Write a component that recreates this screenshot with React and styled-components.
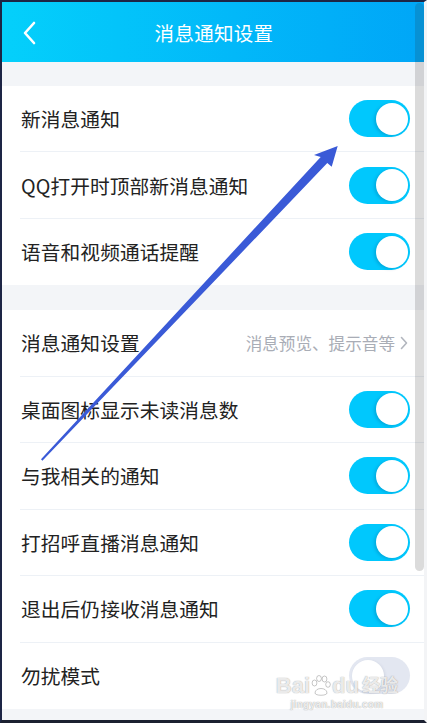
import React from "react";
import styled, { createGlobalStyle } from "styled-components";

const GlobalStyle = createGlobalStyle`
  html, body {
    margin: 0;
    padding: 0;
    background: #ffffff;
  }
  body {
    font-family: "Noto Sans CJK SC", "Noto Sans", sans-serif;
    overflow: hidden;
  }
  * {
    box-sizing: border-box;
  }
`;

const StyledScreen = styled.div`
  position: relative;
  width: 427px;
  height: 723px;
  display: flex;
  flex-direction: column;
  border-top: 2px solid #1d2545;
  border-left: 2px solid #1d2545;
  border-bottom: 3px solid #1b2030;
  border-right: 3px solid #f3f4f6;
  background: #ffffff;
  overflow: hidden;
`;
const StyledHeader = styled.header`
  height: 60px;
  flex-shrink: 0;
  display: flex;
  align-items: center;
  justify-content: center;
  position: relative;
  background: linear-gradient(90deg, #04d0fb 0%, #02b8f9 55%, #00a6f7 100%);
  color: #ffffff;
`;
const StyledBack = styled.div`
  position: absolute;
  left: 18px;
  top: 19px;
  width: 18px;
  height: 24px;
  display: flex;
`;
const StyledTitle = styled.h1`
  margin: 0;
  font-size: 19.5px;
  font-weight: 400;
  letter-spacing: 0.3px;
  padding-left: 2px;
`;
const StyledGap = styled.div`
  height: ${(p) => p.h}px;
  flex-shrink: 0;
  background: #f3f5f8;
`;
const StyledGroup = styled.div`
  display: flex;
  flex-direction: column;
  background: #ffffff;
`;
const StyledRow = styled.div`
  height: ${(p) => p.h}px;
  margin-left: 18px;
  padding: 0 14px 0 1px;
  display: flex;
  align-items: center;
  justify-content: space-between;
  border-bottom: ${(p) => (p.last ? "none" : "1px solid #edf1f6")};
`;
const StyledLabel = styled.span`
  font-size: 19.7px;
  color: #222222;
  letter-spacing: 0.1px;
`;
const StyledValue = styled.span`
  display: flex;
  align-items: center;
  gap: 5px;
  font-size: 16.6px;
  color: #a9adb6;
  margin-right: 2px;
`;
const StyledSwitch = styled.div`
  width: 61px;
  height: 37px;
  border-radius: 19px;
  padding: 2.5px;
  display: flex;
  justify-content: ${(p) => (p.on ? "flex-end" : "flex-start")};
  background: ${(p) => (p.on ? "#00c8fd" : "#e3e7f1")};
`;
const StyledKnob = styled.div`
  width: 32px;
  height: 32px;
  border-radius: 50%;
  background: #ffffff;
  box-shadow: ${(p) =>
    p.on
      ? "-2px 1px 3px rgba(0, 90, 140, 0.25)"
      : "1px 1px 3px rgba(60, 70, 110, 0.12)"};
`;
const StyledFill = styled.div`
  flex: 1;
  background: #f3f5f8;
`;
const StyledScrollThumb = styled.div`
  position: absolute;
  right: 0;
  top: 1px;
  width: 9px;
  height: 568px;
  border-radius: 5px;
  background: rgba(40, 40, 40, 0.17);
`;
const StyledArrow = styled.svg`
  position: absolute;
  left: -2px;
  top: -2px;
  width: 427px;
  height: 723px;
  pointer-events: none;
`;
const StyledWatermark = styled.div`
  position: absolute;
  right: 26px;
  bottom: 9px;
  display: flex;
  flex-direction: column;
  align-items: center;
  color: rgba(255, 255, 255, 0.8);
  text-shadow: 0 0 1px rgba(130, 130, 130, 0.5), 0 0 1px rgba(130, 130, 130, 0.5);
  font-family: "Liberation Sans", "Noto Sans CJK SC", sans-serif;
  pointer-events: none;
`;
const StyledMarkTop = styled.div`
  display: flex;
  align-items: center;
  font-size: 22px;
  font-weight: 700;
  line-height: 26px;
`;
const StyledMarkCn = styled.span`
  font-size: 18px;
  margin-left: 3px;
`;
const StyledMarkSub = styled.div`
  font-size: 10px;
  font-weight: 700;
  letter-spacing: 0.3px;
  line-height: 12px;
`;

const BackIcon = () => (
  <svg width="18" height="24" viewBox="0 0 18 24">
    <path d="M14 2 L5 12 L14 22" fill="none" stroke="#ffffff" strokeWidth="2.6" strokeLinecap="round" strokeLinejoin="round" />
  </svg>
);

const ChevronIcon = () => (
  <svg width="8" height="14" viewBox="0 0 8 14">
    <path d="M1.5 1.5 L6.5 7 L1.5 12.5" fill="none" stroke="#b2b6be" strokeWidth="1.6" strokeLinecap="round" strokeLinejoin="round" />
  </svg>
);

const PawIcon = () => (
  <svg width="22" height="24" viewBox="0 0 22 24">
    <g fill="rgba(255,255,255,0.85)" stroke="rgba(130,130,130,0.5)" strokeWidth="0.9">
      <ellipse cx="4.5" cy="9" rx="2.4" ry="3" />
      <ellipse cx="9" cy="4.5" rx="2.4" ry="3" />
      <ellipse cx="14.5" cy="5" rx="2.4" ry="3" />
      <ellipse cx="18" cy="10.5" rx="2.3" ry="2.8" />
      <path d="M5 19 C5 13, 17 13, 17 19 C17 22, 5 22, 5 19 Z" />
    </g>
  </svg>
);

const Switch = ({ on }) => (
  <StyledSwitch on={on ? 1 : 0}>
    <StyledKnob on={on ? 1 : 0} />
  </StyledSwitch>
);

const topRows = [
  { label: "新消息通知", on: true },
  { label: "QQ打开时顶部新消息通知", on: true },
  { label: "语音和视频通话提醒", on: true },
];

const bottomRows = [
  { label: "消息通知设置", value: "消息预览、提示音等" },
  { label: "桌面图标显示未读消息数", on: true },
  { label: "与我相关的通知", on: true },
  { label: "打招呼直播消息通知", on: true },
  { label: "退出后仍接收消息通知", on: true },
  { label: "勿扰模式", on: false },
];

const App = () => {
  return (
    <>
      <GlobalStyle />
      <StyledScreen>
        <StyledHeader>
          <StyledBack>
            <BackIcon />
          </StyledBack>
          <StyledTitle>消息通知设置</StyledTitle>
        </StyledHeader>
        <StyledGap h={24} />
        <StyledGroup>
          {topRows.map((row, idx) => (
            <StyledRow key={row.label} h={66.4} last={idx === topRows.length - 1}>
              <StyledLabel>{row.label}</StyledLabel>
              <Switch on={row.on} />
            </StyledRow>
          ))}
        </StyledGroup>
        <StyledGap h={25} />
        <StyledGroup>
          {bottomRows.map((row, idx) => (
            <StyledRow key={row.label} h={66.5} last={idx === bottomRows.length - 1}>
              <StyledLabel>{row.label}</StyledLabel>
              {row.value ? (
                <StyledValue>
                  {row.value}
                  <ChevronIcon />
                </StyledValue>
              ) : (
                <Switch on={row.on} />
              )}
            </StyledRow>
          ))}
        </StyledGroup>
        <StyledFill />
        <StyledScrollThumb />
        <StyledWatermark>
          <StyledMarkTop>
            Bai
            <PawIcon />
            du
            <StyledMarkCn>经验</StyledMarkCn>
          </StyledMarkTop>
          <StyledMarkSub>jingyan.baidu.com</StyledMarkSub>
        </StyledWatermark>
        <StyledArrow viewBox="0 0 427 723">
          <polygon
            points="41,459.3 320.7,156.9 314,155 337.7,146 331.7,166.7 327.3,163.1 42.4,460.7"
            fill="#3a5ad7"
          />
        </StyledArrow>
      </StyledScreen>
    </>
  );
};

export default App;
